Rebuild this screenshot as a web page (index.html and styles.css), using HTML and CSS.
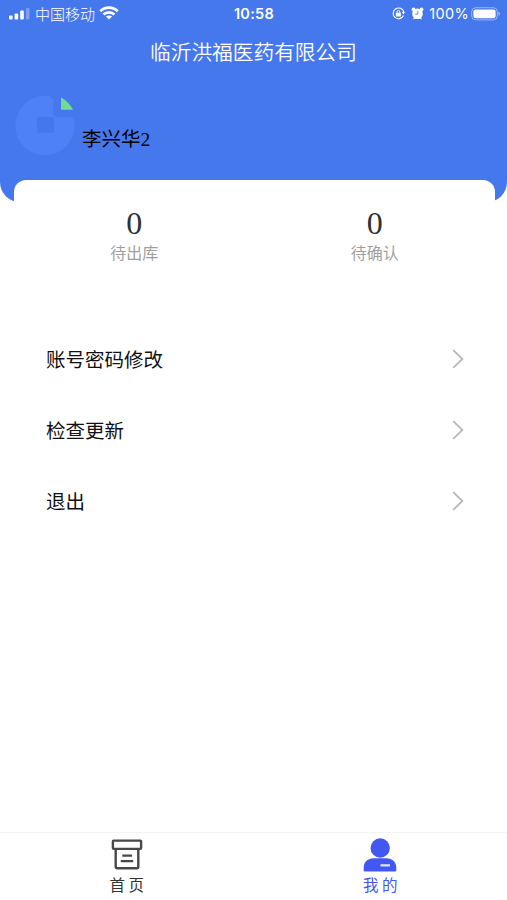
FILE: index.html
```html
<!DOCTYPE html>
<html lang="zh-CN">
<head>
<meta charset="utf-8">
<meta name="viewport" content="width=device-width, initial-scale=1">
<title>我的</title>
<link rel="stylesheet" href="styles.css">
</head>
<body>
<div class="app">
  <header class="header">
    <div class="status">
      <div class="status-left">
        <svg class="signal" width="21" height="12" viewBox="0 0 21 12" fill="#fff"><rect x="0" y="7.5" width="3.6" height="4" rx="1"/><rect x="5.6" y="5.5" width="3.6" height="6" rx="1"/><rect x="11.2" y="2.5" width="3.6" height="9" rx="1"/><rect x="16.9" y="0" width="3.6" height="11.5" rx="1" opacity=".3"/></svg>
        <span class="carrier">中国移动</span>
        <svg class="wifi" width="20" height="14" viewBox="0 0 20 14" fill="none" stroke="#fff" stroke-width="2.8"><path d="M1.3 5.2C6.1.5 13.9.5 18.7 5.2"/><path d="M4.5 8.5c3.1-2.9 7.9-2.9 11 0"/><path d="M10 13.6 6.9 10.5c1.8-1.5 4.4-1.5 6.2 0z" fill="#fff" stroke="none"/></svg>
      </div>
      <time class="clock">10:58</time>
      <div class="status-right">
        <svg width="13" height="13" viewBox="0 0 13 13" fill="none" stroke="#fff"><path d="M11.5 8.6A5.4 5.4 0 1 1 11.8 5" stroke-width="1.1"/><path d="M9.8 5h3.2l-1.4 2.6z" fill="#fff" stroke="none"/><rect x="3.9" y="5.8" width="5" height="3.6" rx=".5" fill="#fff" stroke="none"/><path d="M5 6V4.9a1.4 1.4 0 0 1 2.8 0V6"/></svg>
        <svg class="alarm" width="13" height="13" viewBox="0 0 13 13"><g fill="#fff"><circle cx="6.5" cy="6.8" r="5.3"/><circle cx="2.5" cy="2.5" r="1.9"/><circle cx="10.5" cy="2.5" r="1.9"/><path d="m2 12.5 1.2-2.8 2 1.6zM11 12.5 9.8 9.7l-2 1.6z"/></g><path d="M6.8 4.1v3H4.2" fill="none" stroke="#4678ed" stroke-width=".9"/></svg>
        <span class="percent">100%</span>
        <svg class="battery" width="30" height="14" viewBox="0 0 30 14"><rect x=".7" y=".7" width="25.6" height="12.2" rx="4" fill="none" stroke="#fff" opacity=".45"/><rect x="2.4" y="2.4" width="22.2" height="8.8" rx="2.2" fill="#fff"/><path d="M27.4 4.6c2.2.8 2.2 3.6 0 4.4z" fill="#fff" opacity=".45"/></svg>
      </div>
    </div>
    <h1 class="title">临沂洪福医药有限公司</h1>
    <div class="profile">
      <svg class="avatar" width="60" height="60" viewBox="0 0 60 60"><path d="M30 .8C35 .5 38.4 3 38.4 7v11c0 2 1.5 4.2 4 4.2H55c3.5 0 4.7 3.6 4.7 7.3A29.7 29.7 0 1 1 30 .8z" fill="#4e81f6"/><rect x="22" y="22" width="17" height="16" rx="2" fill="#4477ed"/><path d="M46 2.5c5.4 2.7 9.2 7 12 12.3H46z" fill="#6fdc91"/></svg>
      <span class="name">李兴华2</span>
    </div>
  </header>
  <section class="stats">
    <div class="stat"><span class="count">0</span><span class="label">待出库</span></div>
    <div class="stat"><span class="count">0</span><span class="label">待确认</span></div>
  </section>
  <nav class="menu">
    <a class="row"><span>账号密码修改</span><svg class="chevron" width="12" height="20" viewBox="0 0 12 20"><path d="m1.2 1.2 9.2 8.8-9.2 8.8"/></svg></a>
    <a class="row"><span>检查更新</span><svg class="chevron" width="12" height="20" viewBox="0 0 12 20"><path d="m1.2 1.2 9.2 8.8-9.2 8.8"/></svg></a>
    <a class="row"><span>退出</span><svg class="chevron" width="12" height="20" viewBox="0 0 12 20"><path d="m1.2 1.2 9.2 8.8-9.2 8.8"/></svg></a>
  </nav>
  <nav class="tabs">
    <a class="tab">
      <svg width="34" height="34" viewBox="0 0 34 34" fill="none" stroke="#48484b" stroke-width="2.4"><rect x="2.9" y="2.6" width="28.2" height="8.3" rx=".8"/><path d="M5.7 10.9v18.2q0 1.2 1.2 1.2h20.2q1.2 0 1.2-1.2V10.9M12.3 17.6h9.8M10.8 23.1h12.4"/></svg>
      <span>首 页</span>
    </a>
    <a class="tab active">
      <svg width="34" height="34" viewBox="0 0 34 34"><circle cx="17.2" cy="10" r="9.7" fill="#4358f2"/><path d="M.7 33v-3.5c0-5.5 4.3-9.2 10-9.2h12.6c5.7 0 10 3.7 10 9.2V32.6q0 1-1 1H1.7q-1 0-1-1z" fill="#4358f2"/><rect x="17.5" y="26.2" width="9.5" height="2.3" fill="#dce0ff"/></svg>
      <span>我 的</span>
    </a>
  </nav>
</div>
</body>
</html>
```
FILE: styles.css
```css
* { box-sizing: border-box; }
body { margin: 0; background: #fff; font-family: "Liberation Sans", "Noto Sans CJK SC", sans-serif; }
svg { display: block; flex: none; }
.app { display: flex; flex-direction: column; height: 900px; overflow: hidden; }
.header { height: 202px; flex: none; background: #4678ed; border-radius: 0 0 20px 20px; }
.status { display: grid; grid-template-columns: 1fr auto 1fr; align-items: center; height: 27px; padding: 0 6px 0 9px; color: #fff; }
.status-left, .status-right { display: flex; align-items: center; }
.status-right { justify-content: flex-end; }
.carrier { margin-left: 5px; font: 300 15px/27px "Noto Sans CJK SC", sans-serif; }
.wifi { margin: -2px 0 0 4px; }
.clock { margin-right: 2px; font: 600 14.5px/27px Inter, sans-serif; letter-spacing: .3px; }
.alarm { margin-left: 6px; }
.percent { margin-left: 5px; font: 400 14.5px/27px Inter, sans-serif; letter-spacing: .3px; }
.battery { margin-left: 2px; }
.title { margin: 7px 0 0; height: 35px; color: #fff; font: 350 20.7px/34px "Noto Sans CJK SC", sans-serif; text-align: center; }
.profile { display: flex; align-items: flex-start; padding: 26px 0 0 15px; }
.name { margin: 31px 0 0 7px; font: 400 19.5px/28px "Liberation Serif", "Noto Sans CJK SC", serif; color: #000; }
.stats { display: grid; grid-template-columns: 1fr 1fr; flex: none; height: 120px; margin: -22px 12px 0 14px; padding-top: 25px; background: #fff; border-radius: 12px 12px 0 0; position: relative; }
.stat { display: flex; flex-direction: column; align-items: center; }
.count { font: 400 32px/36px "Liberation Serif", serif; color: #303133; }
.label { margin-top: -1px; font: 400 16px/24px "Noto Sans CJK SC", sans-serif; color: #a0a0a0; }
.menu { flex: 1; padding: 23.5px 43px 0 46px; }
.row { display: flex; align-items: center; justify-content: space-between; height: 71px; color: #111; font: 400 19.5px/28px "Noto Sans CJK SC", sans-serif; }
.chevron { fill: none; stroke: #b8b8b8; stroke-width: 1.8; }
.tabs { display: grid; grid-template-columns: 1fr 1fr; flex: none; height: 68px; border-top: 1px solid #f3f3f3; background: #fff; }
.tab { display: flex; flex-direction: column; align-items: center; padding-top: 5px; color: #333; font: 400 15.5px/22px "Noto Sans CJK SC", sans-serif; }
.tab span { margin-top: 1px; }
.active { color: #4358f2; }
```
